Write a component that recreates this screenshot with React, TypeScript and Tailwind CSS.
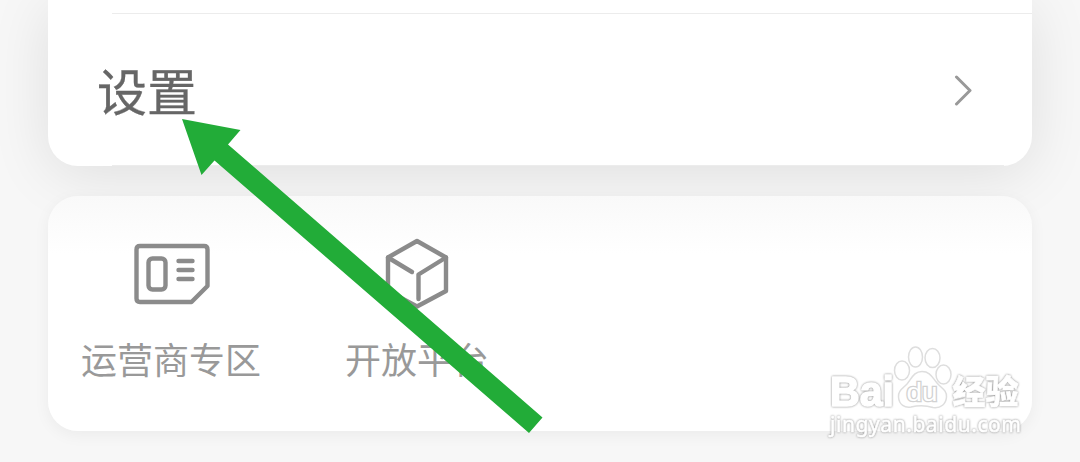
function CardIcon() {
  return (
    <svg
      width="78"
      height="64"
      viewBox="0 0 78 64"
      fill="none"
      stroke="#8b8b8b"
      strokeWidth="4.4"
      strokeLinecap="round"
      strokeLinejoin="round"
      className="ml-0.5 mt-0.5"
    >
      <path d="M7 4H71Q74.5 4 74.5 7.5V44L58.5 60H7Q3.5 60 3.5 56.5V7.5Q3.5 4 7 4Z" />
      <rect x="15.5" y="16.5" width="17" height="31" rx="4" />
      <path d="M45.5 19H59.5M45.5 28H59.5M45.5 37H59.5" />
    </svg>
  )
}

function CubeIcon() {
  return (
    <svg
      width="66"
      height="74"
      viewBox="0 0 66 74"
      fill="none"
      stroke="#8b8b8b"
      strokeWidth="4.4"
      strokeLinecap="round"
      strokeLinejoin="round"
    >
      <path d="M33 5L62 21.5V55L33 70.5L4 55V21.5Z" />
      <path d="M4 21.5L28 36M62 21.5L34.5 38.5V63" />
    </svg>
  )
}

function Arrow() {
  return (
    <svg className="absolute left-0 top-0" width="1080" height="462" viewBox="0 0 1080 462">
      <path d="M182 119L240.5 130L228 144.5L542.5 417.5L529 433L214.5 160.5L201.5 175Z" fill="#22ac38" />
    </svg>
  )
}

function Watermark() {
  return (
    <svg className="absolute left-[810px] top-[330px]" width="270" height="132" viewBox="0 0 270 132">
      <g fill="#fff" stroke="#dedede" strokeWidth="1.5" strokeLinejoin="round">
        <ellipse cx="92" cy="40.5" rx="7.5" ry="9.5" />
        <ellipse cx="105.5" cy="27" rx="7" ry="10" />
        <ellipse cx="122.5" cy="28" rx="7.5" ry="9.5" />
        <ellipse cx="133.5" cy="44.5" rx="7.5" ry="9.5" />
        <path d="M112 41.5C104 41.5 102 48 97 54C92 59 88 61 88.5 67C89 75 95 78 101 77C108 75.5 116 75.5 123 77.5C131 78.5 136 74 136.5 67C137 60 131 58 127 53C122 47 120 41.5 112 41.5Z" />
      </g>
      <g
        fill="#fff"
        stroke="#fff"
        strokeWidth="1.6"
        strokeLinejoin="round"
        className="[filter:drop-shadow(0_0_1px_#888)]"
      >
        <text
          x="20"
          y="75.5"
          fontSize="42"
          fontWeight="700"
          textLength="64"
          lengthAdjust="spacingAndGlyphs"
          className="font-['Liberation_Sans',sans-serif]"
        >
          Bai
        </text>
        <text
          x="142.5"
          y="73.5"
          fontSize="33"
          fontWeight="900"
          textLength="66"
          lengthAdjust="spacingAndGlyphs"
          strokeWidth="0.6"
          className="font-['Noto_Sans_CJK_SC',sans-serif]"
        >
          经验
        </text>
        <text
          x="20"
          y="101.5"
          fontSize="21"
          textLength="191"
          strokeWidth="0.6"
          className="font-['Noto_Sans',sans-serif]"
        >
          jingyan.baidu.com
        </text>
      </g>
      <text
        x="96.5"
        y="71"
        fontSize="26"
        textLength="31"
        lengthAdjust="spacingAndGlyphs"
        fill="#fff"
        stroke="#d2d2d2"
        strokeWidth="2.6"
        paintOrder="stroke"
        className="font-['Liberation_Sans',sans-serif]"
      >
        du
      </text>
    </svg>
  )
}

const services = [
  { label: "运营商专区", icon: CardIcon },
  { label: "开放平台", icon: CubeIcon },
]

export default function App() {
  return (
    <div className="relative h-[462px] w-[1080px] overflow-hidden bg-[#f7f7f7] px-12 font-['Noto_Sans_CJK_SC',sans-serif]">
      <section className="h-[166px] rounded-b-[30px] bg-white shadow-[0_8px_60px_rgba(0,0,0,0.10)]">
        <div className="h-[13px]" />
        <div className="ml-16 h-px bg-[#ececec]" />
        <div className="flex h-[151px] items-center justify-between pl-[49px] pr-[60px]">
          <span className="mb-0.5 text-[50px] leading-[60px] text-[#666] [-webkit-text-stroke:0.3px_#666]">
            设置
          </span>
          <svg width="20" height="32" viewBox="0 0 20 32" fill="none">
            <path
              d="M4.5 3L18 16.5L4.5 30"
              stroke="#999"
              strokeWidth="3"
              strokeLinecap="round"
              strokeLinejoin="round"
            />
          </svg>
        </div>
        <div className="ml-16 mr-7 h-px bg-[#ececec]" />
      </section>

      <section className="relative mt-[30px] flex h-[235px] rounded-[30px] bg-linear-to-b from-[#f9f9f9] to-white to-[58px] pt-10 shadow-[0_4px_16px_rgba(0,0,0,0.05)]">
        {services.map((item) => (
          <div key={item.label} className="flex w-[246px] flex-col items-center">
            <div className="flex h-[74px] items-center">
              <item.icon />
            </div>
            <span className="mt-[22px] text-4xl leading-[52px] text-[#999]">{item.label}</span>
          </div>
        ))}
      </section>

      <Arrow />
      <Watermark />
    </div>
  )
}
